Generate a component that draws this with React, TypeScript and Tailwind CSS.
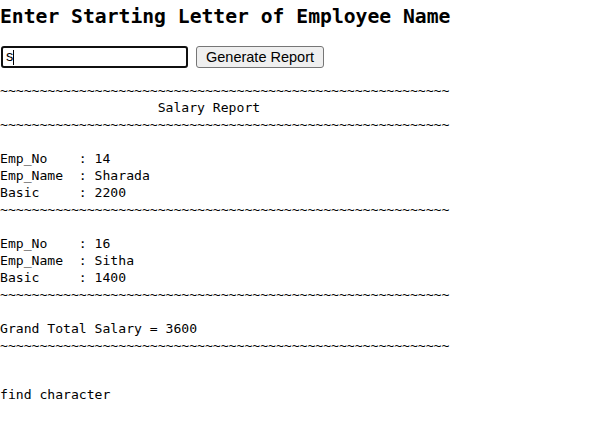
import React from "react";

const tildes = "~".repeat(57);

const employees = [
  { no: 14, name: "Sharada", basic: 2200 },
  { no: 16, name: "Sitha", basic: 1400 },
];

const App = () => {
  const total = employees.reduce((s, e) => s + e.basic, 0);
  const lines: string[] = [tildes, " ".repeat(20) + "Salary Report", tildes, ""];
  employees.forEach((e) => {
    lines.push(`Emp_No    : ${e.no}`);
    lines.push(`Emp_Name  : ${e.name}`);
    lines.push(`Basic     : ${e.basic}`);
    lines.push(tildes);
    lines.push("");
  });
  lines.push(`Grand Total Salary = ${total}`);
  lines.push(tildes);

  return (
    <div className="w-[591px] h-[425px] bg-white text-black font-['DejaVu_Sans_Mono',monospace]">
      <h3 className="pt-[5px] text-[19.7px] leading-[23px] font-bold">
        Enter Starting Letter of Employee Name
      </h3>
      <div className="flex items-center gap-[8px] mt-[18px] ml-[1px]">
        <div className="w-[187px] h-[22px] border-2 border-[#101010] rounded-[3px] flex items-center pl-[3px] font-['Liberation_Sans',sans-serif] text-[14.5px]">
          s<span className="inline-block w-[1px] h-[15px] bg-black" />
        </div>
        <button className="h-[22px] px-[9px] bg-[#efefef] border border-[#767676] rounded-[3px] font-['Liberation_Sans',sans-serif] text-[14.5px] leading-[20px] text-black">
          Generate Report
        </button>
      </div>
      <pre className="mt-[14px] font-['DejaVu_Sans_Mono',monospace] text-[13.1px] leading-[17px] whitespace-pre">
        {lines.join("\n")}
      </pre>
      <pre className="mt-[32px] font-['DejaVu_Sans_Mono',monospace] text-[13.1px] leading-[17px]">
        find character
      </pre>
    </div>
  );
};

export default App;
